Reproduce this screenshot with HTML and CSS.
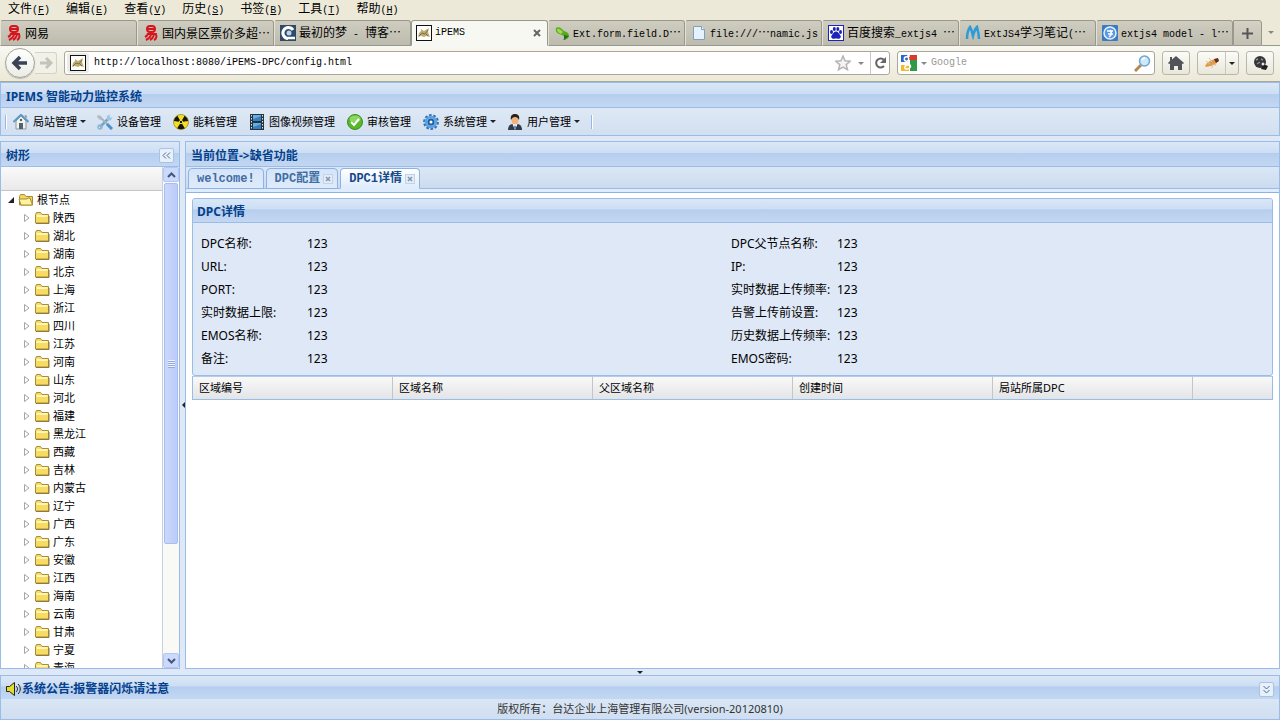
FILE: index.html
```html
<!DOCTYPE html>
<html lang="zh-CN">
<head>
    <meta charset="UTF-8">
    <meta name="viewport" content="width=device-width, initial-scale=1.0">
    <title>iPEMS</title>
    <link rel="stylesheet" href="styles.css">
</head>
<body>
    <!-- Shared icons -->
    <svg class="icon-defs" aria-hidden="true">
        <symbol id="i-netease" viewBox="0 0 16 16">
            <g fill="none" stroke="#d8141c" stroke-width="2">
                <rect x="4" y="1" width="8" height="6" rx="3"/>
                <path d="M5 4h6M4 9h9c1 3 0 5-2 6M5 8c0 2-1 3-3 4M8 10c-1 3-3 4-5 5M11 10c-1 3-2 4-4 5"/>
            </g>
        </symbol>
        <symbol id="i-cnblog" viewBox="0 0 16 16">
            <rect width="16" height="16" fill="#2f4a68"/>
            <path d="M13 5A5.500 5.500 0 1 0 8 13.500" fill="none" stroke="#fff" stroke-width="3"/>
            <circle cx="9" cy="8" r="2.500" fill="#b9d4ee"/>
            <path d="M8 13h7" stroke="#fff" stroke-width="2.500"/>
        </symbol>
        <symbol id="i-tomcat" viewBox="0 0 16 16">
            <rect x=".5" y=".5" width="15" height="15" fill="#fff" stroke="#111"/>
            <path d="M2 12l1-4 2-2 0-2 3 2 5-3-1 4 2 5-4-1-2 1-3-1z" fill="#c2ad6c"/>
            <path d="M3 11l3-3 3 1 3-4M10 9l2 2" fill="none" stroke="#77705a"/>
        </symbol>
        <symbol id="i-sencha" viewBox="0 0 16 16">
            <path d="M2 3c3-2 6 1 8 3 3 1 5 2 5 5 0 2-3 4-6 4 2-2 2-4-1-5C4 9 1 7 2 3z" fill="#58a921"/>
            <path d="M3 4c2-1 4 1 6 3l-2 2C4 8 3 6 3 4z" fill="#9bdc46"/>
            <path d="M10 10l5 1-5 4z" fill="#26701a"/>
        </symbol>
        <symbol id="i-page" viewBox="0 0 16 16">
            <path d="M2.500 1.500h8l3 3v10h-11z" fill="#e6f1fb" stroke="#7f9fc0"/>
            <path d="M10.500 1.500v3h3" fill="#fff" stroke="#7f9fc0"/>
        </symbol>
        <symbol id="i-baidu" viewBox="0 0 16 16">
            <rect x=".5" y=".5" width="15" height="15" fill="#fff" stroke="#1d22b8"/>
            <g fill="#1d22b8">
                <ellipse cx="3.500" cy="7" rx="1.500" ry="2"/>
                <ellipse cx="6.300" cy="4" rx="1.500" ry="2"/>
                <ellipse cx="9.800" cy="4" rx="1.500" ry="2"/>
                <ellipse cx="12.500" cy="7" rx="1.500" ry="2"/>
                <path d="M8 6.500c2 0 3 2 4 3.500 2 2 0 4-2 3.800-1.500-.3-2.500-.3-4 0-2 .2-4-1.800-2-3.800 1-1.500 2-3.500 4-3.500z"/>
            </g>
        </symbol>
        <symbol id="i-myblog" viewBox="0 0 16 16">
            <path d="M2 14c0-5 1-9 3-12 2 3 2 6 3 9 1-4 2-7 4-9 1 4 2 7 2 12" fill="none" stroke="#2d9bd8" stroke-width="2.500"/>
        </symbol>
        <symbol id="i-iteye" viewBox="0 0 16 16">
            <rect width="16" height="16" rx="1" fill="#3c7ac4"/>
            <circle cx="8" cy="8" r="6" fill="#5b9ae0" stroke="#e6f2ff" stroke-width="1.500"/>
            <path d="M5 6h6M8 5c2 3 2 5-1 7M6 9h5" fill="none" stroke="#fff" stroke-width="1.500"/>
        </symbol>
        <symbol id="i-house" viewBox="0 0 16 16">
            <path d="M3 7l5-5 5 5v8H3z" fill="#f2f2ee" stroke="#8e979d"/>
            <path d="M.5 8L8 .8 15.500 8" fill="none" stroke="#5b9cc8" stroke-width="2"/>
            <rect x="6" y="9" width="4" height="6" fill="#4f6470"/>
            <circle cx="8" cy="6" r="1.200" fill="#4f6470"/>
            <path d="M11.500 1.500h2v3z" fill="#8e6a50"/>
        </symbol>
        <symbol id="i-tools" viewBox="0 0 16 16">
            <path d="M3 13L12 4" stroke="#6fa6cf" stroke-width="2.500"/>
            <path d="M10 2l3-1.500-.5 3 3 0-2 3-3.500-.5z" fill="#9cc3e0"/>
            <path d="M3 3l8 8" stroke="#a8b2ba" stroke-width="2"/>
            <path d="M10 10l5 5" stroke="#4b90cf" stroke-width="3"/>
            <path d="M1 1l3 1 1 3-2 1-3-3z" fill="#b2bbc2"/>
            <circle cx="3" cy="13" r="2" fill="none" stroke="#8cb4d4" stroke-width="1.500"/>
        </symbol>
        <symbol id="i-nuclear" viewBox="0 0 16 16">
            <circle cx="8" cy="8" r="7.500" fill="#f5df25" stroke="#8c7d10" stroke-width=".7"/>
            <path d="M8 8L.8 7A7.300 7.300 0 0 1 4.400 1.700zM8 8l3.600-6.300A7.300 7.300 0 0 1 15.200 7zM8 8l3.800 6.200a7.300 7.300 0 0 1-7.600 0z" fill="#17160e"/>
            <circle cx="8" cy="8" r="1.700" fill="#17160e" stroke="#f5df25"/>
        </symbol>
        <symbol id="i-film" viewBox="0 0 16 16">
            <rect x="1" width="14" height="16" fill="#26323c"/>
            <path d="M4 1h8v6H4zM4 9h8v6H4z" fill="#62b0e6"/>
            <path d="M4 5l8-3v5H4zM4 13l8-3v5H4z" fill="#3680bd"/>
            <path d="M2.500 1v15M13.500 1v15" stroke="#dfe9f0" stroke-dasharray="1.500 1.500"/>
        </symbol>
        <symbol id="i-check" viewBox="0 0 16 16">
            <circle cx="8" cy="8" r="7.500" fill="#57b82d" stroke="#3b8f1d"/>
            <ellipse cx="8" cy="5" rx="5.500" ry="3.500" fill="#8bd766"/>
            <path d="M4 8l3 3 5-6" fill="none" stroke="#fff" stroke-width="2"/>
        </symbol>
        <symbol id="i-gear" viewBox="0 0 16 16">
            <circle cx="8" cy="8" r="6.700" fill="none" stroke="#2d72b8" stroke-width="2.400" stroke-dasharray="2.600 1.600"/>
            <circle cx="8" cy="8" r="5" fill="#a9d3f2" stroke="#5ba3e0" stroke-width="2.500"/>
            <circle cx="8" cy="8" r="2.500" fill="#fff" stroke="#1f5fa4" stroke-width="2"/>
        </symbol>
        <symbol id="i-user" viewBox="0 0 16 16">
            <path d="M1 16c0-4 2-6 5-6h4c3 0 5 2 5 6z" fill="#333c4c"/>
            <path d="M5.500 10L8 16l2.500-6z" fill="#fff"/>
            <path d="M8 11l1 2-1 3-1-3z" fill="#3872b5"/>
            <ellipse cx="8" cy="6" rx="3.500" ry="4.500" fill="#f0b57f"/>
            <path d="M4 6c-1-4 1-6 4-6s5 2 4 6c-1-2-2-3-4-3S5 4 4 6z" fill="#2c211b"/>
        </symbol>
        <symbol id="i-folder" viewBox="0 0 16 16">
            <path d="M1.500 13V4.500l1-2h4l1.500 2h6.500V13z" fill="#f8dc62" stroke="#a98c36"/>
            <path d="M2.500 6h11" stroke="#fff6b8" stroke-width="2"/>
            <path d="M2 13.500h13V6" fill="none" stroke="#8e7940"/>
        </symbol>
        <symbol id="i-folder-open" viewBox="0 0 16 16">
            <path d="M1.500 13V4.500l1-2h4l1.500 2h6.500V13z" fill="#f5d65a" stroke="#a98c36"/>
            <path d="M3 13L1 7h8l1-1h2l2.500 7z" fill="#fff2a0" stroke="#a98c36"/>
        </symbol>
        <symbol id="i-collapsed" viewBox="0 0 8 10">
            <path d="M1.500 1.500L6 5 1.500 8.500z" fill="#fff" stroke="#a5a5a5"/>
        </symbol>
        <symbol id="i-expanded" viewBox="0 0 8 10">
            <path d="M7 2v6H1z" fill="#222"/>
        </symbol>
        <symbol id="i-close" viewBox="0 0 10 10">
            <rect x=".5" y=".5" width="9" height="9" fill="#e3ecf7" stroke="#c3d2e6"/>
            <path d="M3 3l4 4M7 3L3 7" stroke="#8295ad" stroke-width="1.500"/>
        </symbol>
    </svg>

    <!-- Browser menu -->
    <nav class="menubar">
        <button class="menu-item">文件<span class="latin">(<u>F</u>)</span></button>
        <button class="menu-item">编辑<span class="latin">(<u>E</u>)</span></button>
        <button class="menu-item">查看<span class="latin">(<u>V</u>)</span></button>
        <button class="menu-item">历史<span class="latin">(<u>S</u>)</span></button>
        <button class="menu-item">书签<span class="latin">(<u>B</u>)</span></button>
        <button class="menu-item">工具<span class="latin">(<u>T</u>)</span></button>
        <button class="menu-item">帮助<span class="latin">(<u>H</u>)</span></button>
    </nav>

    <!-- Browser tabs -->
    <div class="browser-tabs">
        <button class="browser-tab"><svg class="icon"><use href="#i-netease"/></svg><span>网易</span></button>
        <button class="browser-tab"><svg class="icon"><use href="#i-netease"/></svg><span>国内景区票价多超…</span></button>
        <button class="browser-tab"><svg class="icon"><use href="#i-cnblog"/></svg><span>最初的梦<span class="latin"> - </span>博客…</span></button>
        <button class="browser-tab active"><svg class="icon"><use href="#i-tomcat"/></svg><span class="latin">iPEMS</span>
            <svg class="tab-x" viewBox="0 0 8 8"><path d="M1 1l6 6M7 1L1 7" stroke="#666" stroke-width="2"/></svg>
        </button>
        <button class="browser-tab"><svg class="icon"><use href="#i-sencha"/></svg><span><span class="latin">Ext.form.field.D</span>…</span></button>
        <button class="browser-tab"><svg class="icon"><use href="#i-page"/></svg><span><span class="latin">file:///</span>…<span class="latin">namic.js</span></span></button>
        <button class="browser-tab"><svg class="icon"><use href="#i-baidu"/></svg><span>百度搜索<span class="latin">_extjs4 </span>…</span></button>
        <button class="browser-tab"><svg class="icon"><use href="#i-myblog"/></svg><span><span class="latin">ExtJS4</span>学习笔记<span class="latin">(</span>…</span></button>
        <button class="browser-tab"><svg class="icon"><use href="#i-iteye"/></svg><span><span class="latin">extjs4 model - l</span>…</span></button>
        <button class="new-tab" aria-label="新建标签页"><svg width="11" height="11" viewBox="0 0 11 11"><path d="M5.500 0v11M0 5.500h11" stroke="#555" stroke-width="2"/></svg></button>
        <button class="all-tabs" aria-label="所有标签页"><span class="arrow light"></span></button>
    </div>

    <!-- Browser address bar -->
    <div class="navbar">
        <div class="history">
            <button class="back" aria-label="后退"><svg width="18" height="16" viewBox="0 0 18 16"><path d="M9 2L3 8l6 6M3 8h13" fill="none" stroke="#3b4454" stroke-width="3.500"/></svg></button>
            <button class="forward" aria-label="前进"><svg width="14" height="14" viewBox="0 0 14 14"><path d="M7 2l5 5-5 5M12 7H1" fill="none" stroke="#c3c3bc" stroke-width="3"/></svg></button>
        </div>
        <div class="address">
            <span class="site"><svg class="icon"><use href="#i-tomcat"/></svg></span>
            <input type="text" aria-label="地址" value="http://localhost:8080/iPEMS-DPC/config.html">
            <button aria-label="添加书签"><svg width="16" height="16" viewBox="0 0 16 16"><path d="M8 1l2 4.800 5.200.4-4 3.400 1.300 5.100L8 12l-4.500 2.700 1.300-5.100-4-3.400L6 5.800z" fill="#f4f4f4" stroke="#b4b4b4" stroke-width="1.500"/></svg></button>
            <button class="drop" aria-label="历史记录"><span class="arrow light"></span></button>
            <button class="reload" aria-label="刷新"><svg width="13" height="14" viewBox="0 0 13 14"><path d="M10 4A4.500 4.500 0 1 0 10 10" fill="none" stroke="#666" stroke-width="2"/><path d="M12 1v6H6z" fill="#666"/></svg></button>
        </div>
        <div class="search">
            <svg width="16" height="16" viewBox="0 0 16 16"><rect width="16" height="16" fill="#fff"/><path d="M8 0h8v5H8z" fill="#d93a2b"/><path d="M9 5h7v11H9z" fill="#2f9b45"/><path d="M0 0h7v7H0z" fill="#2a66c8"/><path d="M0 10h8v6H0z" fill="#f1bc28"/><circle cx="5.500" cy="4" r="2.200" fill="none" stroke="#fff" stroke-width="1.500"/><path d="M9 1H6M6 7c3 1 3 3 0 3-3 1-3 4 0 4s5-3 2-5" fill="none" stroke="#fff" stroke-width="1.500"/></svg>
            <span class="arrow light"></span>
            <input type="text" aria-label="搜索" placeholder="Google">
            <button aria-label="搜索"><svg width="17" height="17" viewBox="0 0 17 17"><path d="M1 16l6-6" stroke="#b98550" stroke-width="3"/><circle cx="10.500" cy="6" r="5" fill="#cde9fb" stroke="#6fa5cf" stroke-width="1.500"/><path d="M8 5a3 3 0 0 1 3-2" fill="none" stroke="#fff" stroke-width="1.500"/></svg></button>
        </div>
        <button class="chrome-btn" aria-label="主页"><svg width="16" height="14" viewBox="0 0 16 14"><path d="M8 0l8 7-1 1-1-.5V14h-4v-4H6v4H2V7.500L1 8 0 7l2-2V1h2v2.500z" fill="#505459"/></svg></button>
        <div class="chrome-btn split">
            <button aria-label="Firebug"><svg width="16" height="14" viewBox="0 0 16 14"><path d="M1 10c2-4 6-6 10-7l3 1-2 4-5 2-5 1z" fill="#e39a4a"/><path d="M2 5l4 3M5 2l3 4M8 12l1-4M12 10l-1-3" stroke="#d8c4a4"/><path d="M10 3l4-1 1 3-3 2z" fill="#5d2f16"/></svg></button>
            <button class="drop" aria-label="Firebug 菜单"><span class="arrow"></span></button>
        </div>
        <button class="chrome-btn" aria-label="插件"><svg width="15" height="14" viewBox="0 0 15 14"><circle cx="7" cy="6" r="6" fill="#34363a"/><path d="M3 4l2-1M4 8l3-2M8 3l2 1" fill="none" stroke="#8d8f93" stroke-width="1.500"/><path d="M8 13l2-5 5 2-2 4z" fill="#1d1e20"/><circle cx="10" cy="8" r="1.500" fill="#e5e5e5"/></svg></button>
    </div>

    <!-- Application header -->
    <header class="app-header">
        <h1 class="panel-title">IPEMS 智能动力监控系统</h1>
        <div class="toolbar">
            <span class="tool-sep"></span>
            <button class="tool-btn"><svg class="icon"><use href="#i-house"/></svg>局站管理<span class="arrow"></span></button>
            <button class="tool-btn"><svg class="icon"><use href="#i-tools"/></svg>设备管理</button>
            <button class="tool-btn"><svg class="icon"><use href="#i-nuclear"/></svg>能耗管理</button>
            <button class="tool-btn"><svg class="icon"><use href="#i-film"/></svg>图像视频管理</button>
            <button class="tool-btn"><svg class="icon"><use href="#i-check"/></svg>审核管理</button>
            <button class="tool-btn"><svg class="icon"><use href="#i-gear"/></svg>系统管理<span class="arrow"></span></button>
            <button class="tool-btn"><svg class="icon"><use href="#i-user"/></svg>用户管理<span class="arrow"></span></button>
            <span class="tool-sep"></span>
        </div>
    </header>

    <div class="workspace">
        <!-- Station tree -->
        <aside class="west">
            <div class="panel-title">
                <h2>树形</h2>
                <button class="collapse" aria-label="收起"><svg width="9" height="7" viewBox="0 0 9 7"><path d="M4 .5l-3 3 3 3M8 .5l-3 3 3 3" fill="none" stroke="#4a6a96"/></svg></button>
            </div>
            <div class="west-body">
                <div class="tree-view">
                    <div class="tree-head"></div>
                    <ul class="tree">
                        <li class="root"><svg class="expander"><use href="#i-expanded"/></svg><svg class="icon"><use href="#i-folder-open"/></svg>根节点</li>
                        <li><svg class="expander"><use href="#i-collapsed"/></svg><svg class="icon"><use href="#i-folder"/></svg>陕西</li>
                        <li><svg class="expander"><use href="#i-collapsed"/></svg><svg class="icon"><use href="#i-folder"/></svg>湖北</li>
                        <li><svg class="expander"><use href="#i-collapsed"/></svg><svg class="icon"><use href="#i-folder"/></svg>湖南</li>
                        <li><svg class="expander"><use href="#i-collapsed"/></svg><svg class="icon"><use href="#i-folder"/></svg>北京</li>
                        <li><svg class="expander"><use href="#i-collapsed"/></svg><svg class="icon"><use href="#i-folder"/></svg>上海</li>
                        <li><svg class="expander"><use href="#i-collapsed"/></svg><svg class="icon"><use href="#i-folder"/></svg>浙江</li>
                        <li><svg class="expander"><use href="#i-collapsed"/></svg><svg class="icon"><use href="#i-folder"/></svg>四川</li>
                        <li><svg class="expander"><use href="#i-collapsed"/></svg><svg class="icon"><use href="#i-folder"/></svg>江苏</li>
                        <li><svg class="expander"><use href="#i-collapsed"/></svg><svg class="icon"><use href="#i-folder"/></svg>河南</li>
                        <li><svg class="expander"><use href="#i-collapsed"/></svg><svg class="icon"><use href="#i-folder"/></svg>山东</li>
                        <li><svg class="expander"><use href="#i-collapsed"/></svg><svg class="icon"><use href="#i-folder"/></svg>河北</li>
                        <li><svg class="expander"><use href="#i-collapsed"/></svg><svg class="icon"><use href="#i-folder"/></svg>福建</li>
                        <li><svg class="expander"><use href="#i-collapsed"/></svg><svg class="icon"><use href="#i-folder"/></svg>黑龙江</li>
                        <li><svg class="expander"><use href="#i-collapsed"/></svg><svg class="icon"><use href="#i-folder"/></svg>西藏</li>
                        <li><svg class="expander"><use href="#i-collapsed"/></svg><svg class="icon"><use href="#i-folder"/></svg>吉林</li>
                        <li><svg class="expander"><use href="#i-collapsed"/></svg><svg class="icon"><use href="#i-folder"/></svg>内蒙古</li>
                        <li><svg class="expander"><use href="#i-collapsed"/></svg><svg class="icon"><use href="#i-folder"/></svg>辽宁</li>
                        <li><svg class="expander"><use href="#i-collapsed"/></svg><svg class="icon"><use href="#i-folder"/></svg>广西</li>
                        <li><svg class="expander"><use href="#i-collapsed"/></svg><svg class="icon"><use href="#i-folder"/></svg>广东</li>
                        <li><svg class="expander"><use href="#i-collapsed"/></svg><svg class="icon"><use href="#i-folder"/></svg>安徽</li>
                        <li><svg class="expander"><use href="#i-collapsed"/></svg><svg class="icon"><use href="#i-folder"/></svg>江西</li>
                        <li><svg class="expander"><use href="#i-collapsed"/></svg><svg class="icon"><use href="#i-folder"/></svg>海南</li>
                        <li><svg class="expander"><use href="#i-collapsed"/></svg><svg class="icon"><use href="#i-folder"/></svg>云南</li>
                        <li><svg class="expander"><use href="#i-collapsed"/></svg><svg class="icon"><use href="#i-folder"/></svg>甘肃</li>
                        <li><svg class="expander"><use href="#i-collapsed"/></svg><svg class="icon"><use href="#i-folder"/></svg>宁夏</li>
                        <li><svg class="expander"><use href="#i-collapsed"/></svg><svg class="icon"><use href="#i-folder"/></svg>青海</li>
                    </ul>
                </div>
                <div class="scrollbar">
                    <button aria-label="向上滚动"><svg width="9" height="6" viewBox="0 0 9 6"><path d="M1 5l3.500-3.500L8 5" fill="none" stroke="#46557c" stroke-width="2"/></svg></button>
                    <div class="track"><div class="thumb"><span class="grip"></span></div></div>
                    <button aria-label="向下滚动"><svg width="9" height="6" viewBox="0 0 9 6"><path d="M1 1l3.500 3.500L8 1" fill="none" stroke="#46557c" stroke-width="2"/></svg></button>
                </div>
            </div>
        </aside>

        <div class="splitter"><svg width="4" height="8" viewBox="0 0 4 8"><path d="M4 1v6L1 4z" fill="#222"/></svg></div>

        <!-- Main content -->
        <main class="center">
            <h2 class="panel-title">当前位置-&gt;缺省功能</h2>
            <div class="tab-strip">
                <button class="tab">welcome!</button>
                <button class="tab closable">DPC配置<svg class="tab-close"><use href="#i-close"/></svg></button>
                <button class="tab closable active">DPC1详情<svg class="tab-close"><use href="#i-close"/></svg></button>
            </div>
            <div class="tab-body">
                <section class="detail">
                    <h3 class="panel-title">DPC详情</h3>
                    <dl class="fields">
                        <div><dt>DPC名称:</dt><dd>123</dd></div>
                        <div><dt>DPC父节点名称:</dt><dd>123</dd></div>
                        <div><dt>URL:</dt><dd>123</dd></div>
                        <div><dt>IP:</dt><dd>123</dd></div>
                        <div><dt>PORT:</dt><dd>123</dd></div>
                        <div><dt>实时数据上传频率:</dt><dd>123</dd></div>
                        <div><dt>实时数据上限:</dt><dd>123</dd></div>
                        <div><dt>告警上传前设置:</dt><dd>123</dd></div>
                        <div><dt>EMOS名称:</dt><dd>123</dd></div>
                        <div><dt>历史数据上传频率:</dt><dd>123</dd></div>
                        <div><dt>备注:</dt><dd>123</dd></div>
                        <div><dt>EMOS密码:</dt><dd>123</dd></div>
                    </dl>
                </section>
                <table class="grid">
                    <thead>
                        <tr>
                            <th>区域编号</th>
                            <th>区域名称</th>
                            <th>父区域名称</th>
                            <th>创建时间</th>
                            <th>局站所属DPC</th>
                            <td class="filler"></td>
                        </tr>
                    </thead>
                </table>
            </div>
        </main>
    </div>

    <div class="splitter-south"><span class="arrow"></span></div>

    <!-- Announcement and copyright -->
    <footer class="south">
        <div class="panel-title">
            <svg width="16" height="14" viewBox="0 0 16 14"><path d="M.5 4.500h3l5-4v13l-5-4h-3z" fill="#e4dc28" stroke="#222"/><path d="M10 4c2 2 2 4 0 6M12 2c3 3 3 7 0 10" fill="none" stroke="#222"/></svg>
            <h2>系统公告:报警器闪烁请注意</h2>
            <button class="collapse" aria-label="展开"><svg width="7" height="9" viewBox="0 0 7 9"><path d="M.5 1l3 3 3-3M.5 5l3 3 3-3" fill="none" stroke="#4a6a96"/></svg></button>
        </div>
        <p class="copyright">版权所有：台达企业上海管理有限公司(version-20120810)</p>
    </footer>
</body>
</html>
```

FILE: styles.css
```css
* {
    box-sizing: border-box;
}

body {
    display: flex;
    flex-direction: column;
    height: 100vh;
    margin: 0;
    overflow: hidden;
    background: #dfe8f6;
    font-family: "Noto Sans", "Noto Sans CJK SC", sans-serif;
    font-size: 11px;
    line-height: 16px;
    color: #000;
}

button, input {
    margin: 0;
    padding: 0;
    border: none;
    background: none;
    font: inherit;
    color: inherit;
}

h1, h2, h3, p, ul, dl, dd {
    margin: 0;
    padding: 0;
    font-size: inherit;
}

svg {
    flex: none;
    display: block;
}

.icon-defs {
    display: none;
}

.icon {
    width: 16px;
    height: 16px;
}

.latin {
    font-family: "Liberation Mono", monospace;
    font-size: 10px;
    white-space: pre;
}

.arrow {
    flex: none;
    border: 3px solid transparent;
    border-top-color: #222;
    border-bottom: none;
}

.arrow.light {
    border-top-color: #888;
}

/* browser */
.menubar {
    flex: none;
    display: flex;
    gap: 16px;
    height: 20px;
    padding: 0 8px 2px;
    background: #ece9d8;
    font-family: "Noto Sans CJK SC", sans-serif;
    font-size: 12px;
}

.browser-tabs {
    flex: none;
    display: flex;
    height: 26px;
    background: #ece9d8;
    font-family: "Noto Sans CJK SC", sans-serif;
    font-size: 12px;
}

.browser-tab {
    flex: 0 1 137px;
    min-width: 0;
    display: flex;
    align-items: center;
    gap: 3px;
    padding: 0 4px 0 5px;
    border: 1px solid #9a988c;
    border-left-color: #e4e2d6;
    border-radius: 3px 3px 0 0;
    background: linear-gradient(#cfcdc0, #bdbbad);
    white-space: nowrap;
}

.browser-tab.active {
    background: #f8f8f2;
    border-left-color: #9a988c;
    border-bottom-color: #f8f8f2;
    padding: 0 6px 0 4px;
}

.tab-x {
    width: 8px;
    height: 8px;
    margin-left: auto;
}

.new-tab {
    flex: none;
    width: 29px;
    display: flex;
    align-items: center;
    justify-content: center;
    border: 1px solid #9a988c;
    border-radius: 0 3px 0 0;
    background: linear-gradient(#d4d2c5, #c3c1b3);
}

.all-tabs {
    flex: 1;
    display: flex;
    align-items: center;
    justify-content: center;
    border-bottom: 1px solid #9a988c;
}

.navbar {
    flex: none;
    display: flex;
    align-items: center;
    gap: 7px;
    height: 36px;
    padding: 0 6px 1px 5px;
    border-bottom: 1px solid #aaa89a;
    background: linear-gradient(#f8f8f2, #ece9d8);
}

.history {
    display: flex;
    align-items: center;
}

.back {
    z-index: 1;
    width: 30px;
    height: 30px;
    display: flex;
    align-items: center;
    justify-content: center;
    border: 1px solid #a5a49b;
    border-radius: 50%;
    background: linear-gradient(#fff, #ecece6);
    box-shadow: 0 1px 1px #bbb9ad;
}

.forward {
    width: 22px;
    height: 22px;
    display: flex;
    align-items: center;
    justify-content: center;
    border: 1px solid #d5d3c6;
    border-left: none;
    border-radius: 0 3px 3px 0;
    background: #f2f1e8;
}

.address, .search {
    height: 24px;
    display: flex;
    align-items: center;
    border: 1px solid #a9a79b;
    border-radius: 3px;
    background: #fff;
}

.address {
    flex: 1;
}

.address input, .search input {
    flex: 1;
    min-width: 0;
    font-family: "Liberation Mono", monospace;
    font-size: 10px;
}

.site {
    display: flex;
    align-items: center;
    height: 20px;
    margin: 0 5px 0 2px;
    padding: 0 3px;
    border-radius: 3px;
    background: #ecebe6;
}

.drop {
    width: 19px;
    display: flex;
    justify-content: center;
}

.reload {
    width: 19px;
    height: 100%;
    display: flex;
    align-items: center;
    justify-content: center;
    border-left: 1px solid #c8c7be;
}

.search {
    flex: 0 1 258px;
    gap: 4px;
    padding: 0 3px;
}

.search input::placeholder {
    color: #999;
}

.chrome-btn {
    flex: none;
    width: 28px;
    height: 24px;
    display: flex;
    align-items: center;
    justify-content: center;
    border: 1px solid #b9b7aa;
    border-radius: 3px;
    background: linear-gradient(#fbfbf8, #e9e7da);
}

.chrome-btn.split {
    width: 42px;
    justify-content: space-between;
    padding-left: 6px;
}

.split .drop {
    width: 13px;
    height: 100%;
    align-items: center;
    border-left: 1px solid #c8c7be;
}

/* shared panel header */
.panel-title {
    flex: none;
    display: flex;
    align-items: center;
    height: 25px;
    padding: 3px 5px 0;
    border-bottom: 1px solid #99bce8;
    background: linear-gradient(#dae7f6, #cddef3 45%, #b5ceee 46%, #c3d7f2);
    color: #04408c;
    font-size: 12px;
    font-weight: bold;
}

.collapse {
    width: 15px;
    height: 15px;
    margin-left: auto;
    display: flex;
    align-items: center;
    justify-content: center;
    border: 1px solid #a9c3e6;
    border-radius: 2px;
    background: #e8f0fa;
}

.app-header {
    flex: none;
    border: 1px solid #99bce8;
}

.toolbar {
    display: flex;
    align-items: center;
    gap: 12px;
    height: 27px;
    padding-left: 4px;
    background: linear-gradient(#dfe9f5, #d1dff0);
}

.tool-sep {
    width: 2px;
    height: 14px;
    border-left: 1px solid #98b8e0;
    background: #fff;
}

.tool-sep:first-child {
    margin-right: -6px;
}

.tool-btn {
    display: flex;
    align-items: center;
    gap: 4px;
}

.tool-btn .arrow {
    margin: 0 -1px;
}

/* workspace */
.workspace {
    flex: 1;
    min-height: 0;
    display: flex;
    margin-top: 5px;
}

.west {
    flex: none;
    width: 180px;
    display: flex;
    flex-direction: column;
    border: 1px solid #99bce8;
}

.west-body {
    flex: 1;
    min-height: 0;
    display: flex;
    background: #fff;
}

.tree-view {
    flex: 1;
    overflow: hidden;
}

.tree-head {
    height: 24px;
    border-bottom: 1px solid #c5c5c5;
    background: linear-gradient(#fafafa, #e9e9e9);
}

.tree {
    list-style: none;
}

.tree li {
    display: flex;
    align-items: center;
    height: 18px;
    padding-left: 22px;
    gap: 3px;
}

.tree li.root {
    padding-left: 6px;
}

.expander {
    width: 8px;
    height: 10px;
}

.scrollbar {
    flex: none;
    width: 17px;
    display: flex;
    flex-direction: column;
    border-left: 1px solid #c6cfe6;
    background: #f9f9f5;
}

.scrollbar button {
    height: 15px;
    display: flex;
    align-items: center;
    justify-content: center;
    border: 1px solid #b5c6f2;
    border-radius: 2px;
    background: #cbd9fa;
}

.track {
    flex: 1;
    padding: 1px;
}

.thumb {
    height: 77%;
    display: flex;
    align-items: center;
    justify-content: center;
    border: 1px solid #a9bdf0;
    border-radius: 2px;
    background: linear-gradient(to right, #cad8fc, #bccbf8);
}

.grip {
    width: 7px;
    height: 8px;
    background: repeating-linear-gradient(#eef3ff 0 1px, #93a8e0 1px 2px);
}

.splitter {
    flex: none;
    width: 5px;
    display: flex;
    align-items: center;
    justify-content: center;
}

.center {
    flex: 1;
    min-width: 0;
    display: flex;
    flex-direction: column;
    border: 1px solid #99bce8;
}

.tab-strip {
    flex: none;
    display: flex;
    align-items: flex-end;
    gap: 2px;
    height: 26px;
    padding: 1px 2px 0;
    border-bottom: 1px solid #8db2e3;
    background: linear-gradient(#dbe7f5, #cbdbef 21px, #99bce8 21px, #99bce8 22px, #deecfd 22px);
}

.tab {
    height: 21px;
    display: flex;
    align-items: center;
    gap: 3px;
    margin-bottom: 3px;
    padding: 0 8px;
    border: 1px solid #8db2e3;
    border-radius: 4px 4px 0 0;
    background: linear-gradient(#d5e4f8, #deebfb);
    color: #416da3;
    font-family: "Liberation Mono", "Noto Sans CJK SC", monospace;
    font-size: 12px;
    font-weight: bold;
}

.tab.closable {
    padding-right: 4px;
}

.tab.active {
    border-bottom-color: #deecfd;
    background: linear-gradient(#fff, #deecfd);
    color: #15498b;
}

.tab-close {
    width: 10px;
    height: 10px;
}

.tab-body {
    flex: 1;
    padding: 5px 6px;
    background: #fff;
}

.detail {
    border: 1px solid #99bce8;
    border-radius: 3px;
    background: #dfe8f6;
}

.detail .panel-title {
    height: 24px;
    padding: 2px 4px 0;
    border-radius: 2px 2px 0 0;
}

.fields {
    display: grid;
    grid-template-columns: 1fr 1fr;
    padding: 9px 11px 5px 8px;
    font-size: 12px;
}

.fields div {
    display: flex;
    align-items: center;
    height: 23px;
}

.fields dt {
    flex: none;
    width: 106px;
}

.grid {
    width: 100%;
    table-layout: fixed;
    border-collapse: separate;
    border-spacing: 0;
    border: 1px solid #99bce8;
    border-top-color: #b8cbe4;
    background: linear-gradient(#f9f9f9, #e3e4e6);
}

.grid th {
    width: 200px;
    height: 22px;
    padding: 0 6px;
    border-right: 1px solid #c5c5c5;
    font-weight: normal;
    text-align: left;
}

.filler {
    padding: 0;
}

/* bottom */
.splitter-south {
    flex: none;
    height: 6px;
    display: flex;
    align-items: center;
    justify-content: center;
}

.south {
    flex: none;
    border: 1px solid #99bce8;
}

.south .panel-title {
    height: 23px;
    border-bottom: none;
}

.copyright {
    padding: 2px 0;
    background: linear-gradient(#d9e6f4, #d0def0);
    color: #333;
    text-align: center;
}
```
